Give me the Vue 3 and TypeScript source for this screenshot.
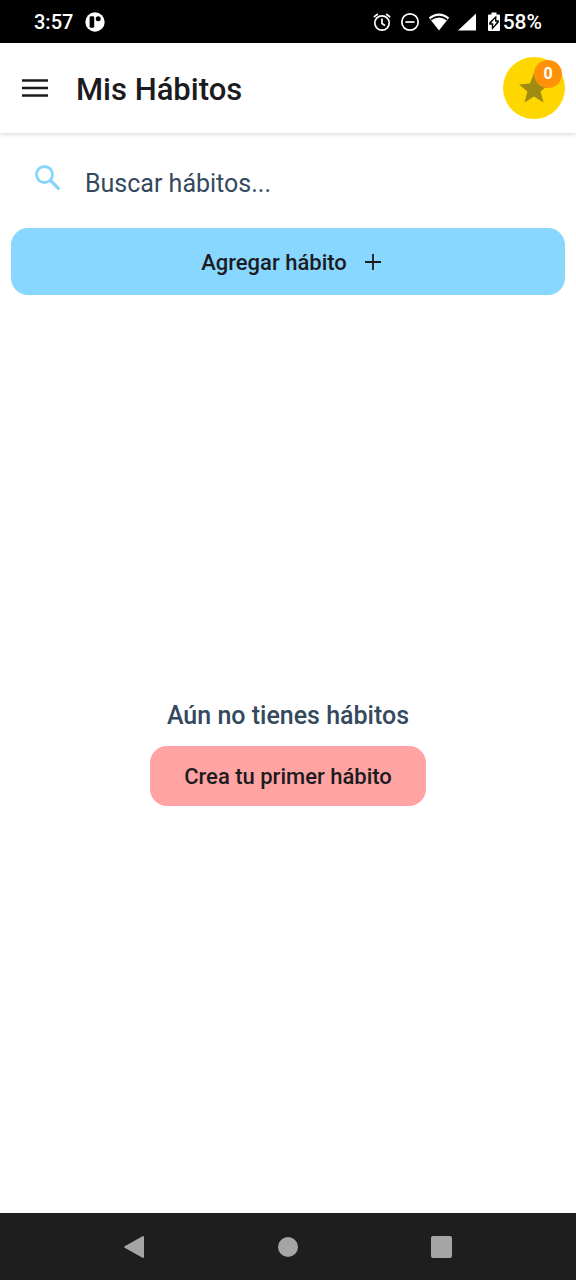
<script setup lang="ts">
import { ref } from 'vue'

const search = ref('')
const points = ref(0)
const time = '3:57'
const battery = '58%'
</script>

<template>
  <div class="screen">
    <div class="status">
      <span class="time">{{ time }}</span>
      <svg class="app-mark" width="20" height="20" viewBox="0 0 20 20" aria-hidden="true">
        <circle cx="10" cy="10" r="9.7" fill="#fff" />
        <rect x="4.6" y="4.2" width="4.6" height="11.6" rx="1.4" fill="#000" />
        <circle cx="13.2" cy="6.8" r="2.5" fill="#000" />
      </svg>
      <div class="indicators">
        <svg width="20" height="20" viewBox="0 0 20 20" fill="none" stroke="#fff" stroke-width="1.7" aria-hidden="true">
          <circle cx="10" cy="11" r="7.2" />
          <path d="M10 6.5V11.5L13 13.5M1.8 5.2L5.8 2M18.2 5.2L14.2 2" />
        </svg>
        <svg width="20" height="20" viewBox="0 0 20 20" fill="none" stroke="#fff" stroke-width="1.7" aria-hidden="true">
          <circle cx="10" cy="10" r="8.2" />
          <path d="M5.5 10H14.5" />
        </svg>
        <svg width="22" height="20" viewBox="0 0 22 20" aria-hidden="true">
          <path d="M0.8 5.6Q11 -2.6 21.2 5.6L11 18.6Z" fill="#fff" />
          <path d="M2.8 7.6Q11 1.6 19.2 7.6" fill="none" stroke="#000" stroke-width="1.7" />
        </svg>
        <svg class="signal" width="18" height="20" viewBox="0 0 18 20" aria-hidden="true">
          <path d="M18 1.5V18.5H0Z" fill="#fff" />
        </svg>
        <span class="battery">
          <svg width="12" height="20" viewBox="0 0 12 20" aria-hidden="true">
            <path d="M1 2.5H3.5V0.5H8.5V2.5H11Q12 2.5 12 3.5V18Q12 19 11 19H1Q0 19 0 18V3.5Q0 2.5 1 2.5Z" fill="#fff" />
            <path d="M8.4 3.4L1.2 10.4V12.8H3.8V18L10.8 10.4V8.2H8.4Z" fill="#000" />
            <path d="M7 6.6L3 11.2H5.3V14.8L9 9.8H7Z" fill="#fff" />
          </svg>
          {{ battery }}
        </span>
      </div>
    </div>

    <header class="bar">
      <button class="menu" type="button" aria-label="Menú">
        <svg width="26" height="18" viewBox="0 0 26 18" aria-hidden="true">
          <path d="M0 1.5H26M0 9H26M0 16.5H26" stroke="#1c1b1f" stroke-width="2.7" />
        </svg>
      </button>
      <h1>Mis Hábitos</h1>
      <button class="points" type="button" aria-label="Puntos">
        <svg width="32" height="30" viewBox="0 0 32 30" aria-hidden="true">
          <path d="M16 0L20 10.6L31 11.4L22.6 18.4L25.5 29.4L16 23.4L6.5 29.4L9.4 18.4L1 11.4L12 10.6Z" fill="#a18c12" />
        </svg>
        <span class="badge">{{ points }}</span>
      </button>
    </header>

    <main>
      <label class="search">
        <svg width="26" height="26" viewBox="0 0 26 26" fill="none" stroke="#87d5fb" aria-hidden="true">
          <circle cx="9.5" cy="9.5" r="8" stroke-width="2.8" />
          <path d="M15.5 15.5L24.3 24.3" stroke-width="3.2" />
        </svg>
        <input v-model="search" type="text" placeholder="Buscar hábitos..." aria-label="Buscar hábitos" />
      </label>
      <button class="add" type="button">
        <span>Agregar hábito</span>
        <svg width="16" height="16" viewBox="0 0 16 16" aria-hidden="true">
          <path d="M8 0V16M0 8H16" stroke="#1c1b1f" stroke-width="1.8" />
        </svg>
      </button>
      <section class="empty">
        <p>Aún no tienes hábitos</p>
        <button class="create" type="button">Crea tu primer hábito</button>
      </section>
    </main>

    <nav class="system">
      <button type="button" aria-label="Atrás">
        <svg width="22" height="24" viewBox="0 0 22 24" aria-hidden="true">
          <path d="M20 2V22L2.2 12Z" fill="#a5a5a5" stroke="#a5a5a5" stroke-width="2" stroke-linejoin="round" />
        </svg>
      </button>
      <button type="button" aria-label="Inicio">
        <svg width="22" height="22" viewBox="0 0 22 22" aria-hidden="true">
          <circle cx="11" cy="11" r="10" fill="#a5a5a5" />
        </svg>
      </button>
      <button type="button" aria-label="Recientes">
        <svg width="22" height="22" viewBox="0 0 22 22" aria-hidden="true">
          <rect width="21" height="22" rx="2" fill="#a5a5a5" />
        </svg>
      </button>
    </nav>
  </div>
</template>

<style>
body {
  margin: 0;
  background: #fff;
}
</style>

<style scoped>
.screen {
  min-height: 100vh;
  display: flex;
  flex-direction: column;
  font-family: Roboto, "Liberation Sans", sans-serif;
  color: #1c1b1f;
  background: #fff;
}
* {
  box-sizing: border-box;
}
svg {
  display: block;
  flex: none;
}
button {
  font: inherit;
  color: inherit;
  border: 0;
  padding: 0;
  background: none;
  cursor: pointer;
}
.status {
  height: 43px;
  display: flex;
  align-items: center;
  padding: 0 34px;
  background: #000;
  color: #fff;
  font-size: 20px;
  font-weight: 500;
}
.app-mark {
  margin-left: 12px;
}
.indicators {
  margin-left: auto;
  display: flex;
  align-items: center;
  gap: 8px;
}
.battery {
  display: flex;
  align-items: center;
  gap: 3px;
  margin-left: 4px;
  font-size: 21px;
}
.bar {
  height: 90px;
  display: flex;
  align-items: center;
  padding: 0 11px;
  background: #fff;
  box-shadow: 0 1px 4px rgba(0, 0, 0, 0.18);
}
.menu {
  width: 48px;
  height: 48px;
  display: grid;
  place-items: center;
}
h1 {
  flex: 1;
  margin: 0 0 0 17px;
  padding-top: 3px;
  font-size: 31px;
  line-height: 40px;
  font-weight: 500;
}
.points {
  position: relative;
  width: 62px;
  height: 62px;
  border-radius: 50%;
  display: grid;
  place-items: center;
  background: #ffd700;
}
.badge {
  position: absolute;
  top: 3px;
  right: 3px;
  width: 28px;
  height: 28px;
  border-radius: 50%;
  background: #ff9109;
  color: #fff;
  font-size: 16px;
  line-height: 28px;
  font-weight: 700;
  text-align: center;
}
main {
  flex: 1;
  display: flex;
  flex-direction: column;
  padding: 12px 11px 0;
}
.search {
  height: 76px;
  display: flex;
  align-items: flex-start;
  gap: 24px;
  padding: 20px 24px 0;
}
input {
  flex: 1;
  min-width: 0;
  height: 36px;
  border: 0;
  padding: 0;
  outline: 0;
  background: none;
  font: inherit;
  font-size: 25px;
  color: #34495e;
}
input::placeholder {
  color: #34495e;
  opacity: 1;
}
.add {
  min-height: 67px;
  margin-top: 7px;
  padding-left: 6px;
  display: flex;
  align-items: center;
  justify-content: center;
  gap: 18px;
  border-radius: 17px;
  background: #87d7ff;
  font-size: 22px;
  font-weight: 500;
}
.add span {
  padding-top: 2px;
}
.empty {
  flex: 1;
  display: flex;
  flex-direction: column;
  align-items: center;
  justify-content: center;
  gap: 14px;
  padding-bottom: 2px;
}
.empty p {
  margin: 0;
  font-size: 25px;
  line-height: 32px;
  font-weight: 500;
  color: #34495e;
}
.create {
  min-height: 60px;
  padding: 0 34px;
  border-radius: 17px;
  background: #ffa3a3;
  font-size: 22px;
  font-weight: 500;
}
.system {
  height: 67px;
  display: grid;
  grid-template-columns: repeat(3, 1fr);
  justify-items: center;
  align-items: center;
  padding: 0 10%;
  background: #1e1e1e;
}
</style>
